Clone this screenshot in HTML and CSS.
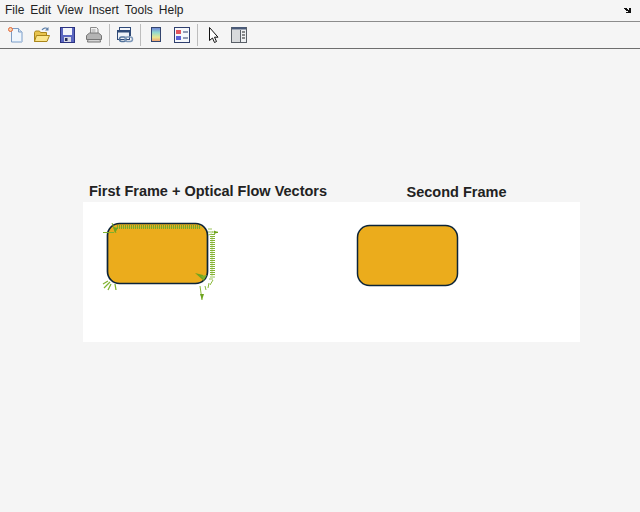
FILE: index.html
```html
<!DOCTYPE html>
<html lang="en">
  <head>
    <meta charset="UTF-8" />
    <title>Figure</title>
    <link rel="stylesheet" href="styles.css">
  </head>
  <body>
    <div class="menubar">
      <div class="menus">
        <span>File</span>
        <span>Edit</span>
        <span>View</span>
        <span>Insert</span>
        <span>Tools</span>
        <span>Help</span>
      </div>
      <svg class="dock" width="7" height="5" viewBox="0 0 7 5">
        <path d="M0 0h3v1h1v1h1V0h2v5H2V4h2V3H2V2H1V1H0z" fill="#111" />
      </svg>
    </div>

    <div class="toolbar">
      <div class="group">
        <svg class="tool" width="18" height="18" viewBox="0 0 18 18">
          <path d="M4.500 2.500h7l3.500 3.500v10h-10.500z" fill="#f0f6fc" stroke="#7d9cc4" />
          <path d="M11.500 2.500v3.500h3.500" fill="#cfe0f2" stroke="#7d9cc4" />
          <path d="M5.500 15.500h9v-9" fill="none" stroke="#b4cbe6" />
          <circle cx="3.500" cy="3.500" r="2" fill="#f9d0a8" stroke="#e2683a" />
        </svg>
        <svg class="tool" width="18" height="18" viewBox="0 0 18 18">
          <path d="M1.500 15.500v-9l1-1.500h4l1 1.500h6v9z" fill="#e8c44e" stroke="#a98519" />
          <path d="M1.500 15.500l2-6h13l-2.500 6z" fill="#fbe68c" stroke="#a98519" />
          <path d="M9 4c1.500-2 4-2.500 5.500-1.500" fill="none" stroke="#5c7ea8" stroke-width="1.200" />
          <path d="M15.500 1v3.500h-3.500z" fill="#5c7ea8" />
        </svg>
        <svg class="tool" width="18" height="18" viewBox="0 0 18 18">
          <rect x="1.500" y="1.500" width="14" height="15" fill="#5a66c0" stroke="#2b3280" />
          <rect x="4" y="2" width="9" height="7" fill="#f2f4fa" />
          <rect x="5" y="11" width="7" height="5" fill="#d8dae4" />
          <rect x="6" y="12" width="2.500" height="3" fill="#222a5c" />
        </svg>
        <svg class="tool" width="18" height="18" viewBox="0 0 18 18">
          <path d="M5.500 1.500h6l1.500 1.500v5h-7.500z" fill="#f2f2f2" stroke="#8a8a8a" />
          <path d="M1.500 9.500l3-2.500h9l3 2.500v4h-15z" fill="#b4b4b4" stroke="#757575" />
          <path d="M3 13.500h12l.5 2.500h-13z" fill="#d6d6d6" stroke="#757575" />
          <path d="M6.500 4h4M6.500 6h4" stroke="#a0a0a0" />
        </svg>
      </div>
      <div class="group">
        <svg class="tool" width="18" height="18" viewBox="0 0 18 18">
          <rect x="3.500" y="1.500" width="11" height="8" fill="#f4f6fa" stroke="#2f4a78" />
          <rect x="1.500" y="4.500" width="12" height="9" fill="#eef2f8" stroke="#2f4a78" />
          <path d="M2 5h11v1.500h-11z" fill="#2f4a78" />
          <rect x="3.500" y="11" width="6.500" height="4.500" rx="2.200" fill="none" stroke="#54749c" stroke-width="1.500" />
          <rect x="9" y="11" width="7.500" height="4.500" rx="2.200" fill="none" stroke="#7d97b8" stroke-width="1.500" />
        </svg>
      </div>
      <div class="group">
        <svg class="tool" width="18" height="18" viewBox="0 0 18 18">
          <defs>
            <linearGradient id="bar" x1="0" y1="0" x2="0" y2="1">
              <stop offset="0" stop-color="#6f7fd8" />
              <stop offset="0.35" stop-color="#8fd8d0" />
              <stop offset="0.7" stop-color="#e8e890" />
              <stop offset="1" stop-color="#f09a70" />
            </linearGradient>
          </defs>
          <rect x="4.500" y="1.500" width="9" height="14" fill="url(#bar)" stroke="#33456e" />
        </svg>
        <svg class="tool" width="18" height="18" viewBox="0 0 18 18">
          <rect x="1.500" y="1.500" width="15" height="15" fill="#f6f8fb" stroke="#2f3f6e" />
          <rect x="3" y="4" width="5" height="4" fill="#e2555c" />
          <rect x="3" y="10" width="5" height="4" fill="#5a62d8" />
          <path d="M10 6h5M10 12h5" stroke="#2f3f6e" />
        </svg>
      </div>
      <div class="group last">
        <svg class="tool" width="18" height="18" viewBox="0 0 18 18">
          <path d="M5.500 1.500v13l3-2.500 2 4.500 2-1-2-4.300h3.500z" fill="#fff" stroke="#111" />
        </svg>
        <svg class="tool" width="18" height="18" viewBox="0 0 18 18">
          <rect x="1.500" y="1.500" width="15" height="15" fill="#eef0f2" stroke="#5a6068" />
          <rect x="2" y="1" width="14" height="2.500" fill="#4a5a78" />
          <rect x="2" y="4" width="8" height="12" fill="#d8dadc" />
          <path d="M10.500 4v12" stroke="#5a6068" />
          <path d="M12 6h3M12 9h3M12 12h3" stroke="#222" />
        </svg>
      </div>
    </div>

    <div class="figure">
      <div class="titles">
        <h2>First Frame + Optical Flow Vectors</h2>
        <h2 class="second">Second Frame</h2>
      </div>
      <svg class="axes" width="497" height="140" viewBox="0 0 497 140">
        <rect x="24.500" y="21.500" width="100" height="60" rx="12" fill="#ebac1c" stroke="#0c2438" stroke-width="1.700" />
        <rect x="274.500" y="23.500" width="100" height="60" rx="12" fill="#ebac1c" stroke="#0c2438" stroke-width="1.500" />

        <!-- flow along the top edge -->
        <path d="M33 25.500h86" stroke="#a8c040" stroke-width="1" opacity="0.7" />
        <path class="hatch" d="M34.500 23v4M36.500 23v4M38.500 23v4M40.500 23v4M42.500 23v4M44.500 23v4M46.500 23v4M48.500 23v4M50.500 23v4M52.500 23v4M54.500 23v4M56.500 23v4M58.500 23v4M60.500 23v4M62.500 23v4M64.500 23v4M66.500 23v4M68.500 23v4M70.500 23v4M72.500 23v4M74.500 23v4M76.500 23v4M78.500 23v4M80.500 23v4M82.500 23v4M84.500 23v4M86.500 23v4M88.500 23v4M90.500 23v4M92.500 23v4M94.500 23v4M96.500 23v4M98.500 23v4M100.500 23v4M102.500 23v4M104.500 23v4M106.500 23v4M108.500 23v4M110.500 23v4M112.500 23v4M114.500 23v4M116.500 23v4" stroke="#7aa828" />
        <path d="M20 30.500h11M29 21l4 10" stroke="#7fb02c" />
        <path d="M30 25l5 1-3 5z" fill="#6fa420" />

        <!-- flow along the right edge -->
        <path d="M129 34v40" stroke="#d4e4ac" stroke-width="1.500" />
        <path class="hatch" d="M127 32.500h5M127 34.500h5M127 36.500h5M127 38.500h5M127 40.500h5M127 42.500h5M127 44.500h5M127 46.500h5M127 48.500h5M127 50.500h5M127 52.500h5M127 54.500h5M127 56.500h5M127 58.500h5M127 60.500h5M127 62.500h5M127 64.500h5M127 66.500h5M127 68.500h5M127 70.500h5M127 72.500h5" stroke="#84b436" />
        <path d="M125 27h4M125 30h5M125 33l4-1M129 30h6M127 75h5M126 77h4" stroke="#9cc45c" />
        <path d="M131 30.500h4" stroke="#6fa420" />
        <path d="M131 28.500l4 2-4 1.500z" fill="#6fa420" />

        <!-- bottom right corner -->
        <path d="M112 71l8 2 1 6z" fill="#6fa420" />
        <path d="M118 74l3 4 3-5z" fill="#7fb02c" />
        <path d="M117 84l2 14M122 84l1 4M126 81l-1 5M130 78l-3 5" stroke="#8aba3a" />
        <path d="M117 92l2 6 2-6z" fill="#6fa420" />

        <!-- bottom left corner -->
        <path d="M27 80l-6 6M25 79l-5 3M28 82l-3 6M32 82l1 6" stroke="#82b432" stroke-width="1.300" />
      </svg>
    </div>
  </body>
</html>
```

FILE: styles.css
```css
* {
  margin: 0;
  padding: 0;
  box-sizing: border-box;
}
body {
  background: #f5f5f5;
  font-family: "Liberation Sans", sans-serif;
  color: #222;
  height: 512px;
  overflow: hidden;
}
.menubar {
  height: 22px;
  display: flex;
  align-items: center;
  justify-content: space-between;
  padding: 0 9px 1px 5px;
  border-bottom: 1px solid #8c8c8c;
  font-size: 12px;
}
.menus {
  display: flex;
  gap: 6px;
}
.toolbar {
  height: 27px;
  display: flex;
  align-items: center;
  padding-left: 7px;
  border-bottom: 1px solid #6e6e6e;
}
.group {
  display: flex;
  align-items: center;
  gap: 8px;
  height: 22px;
  padding-right: 6px;
  margin-right: 6px;
  border-right: 1px solid #bdbdbd;
}
.group.last {
  border-right: 0;
}
.figure {
  margin: 134px 0 0 83px;
  width: 497px;
}
.titles {
  display: grid;
  grid-template-columns: 250px 247px;
  text-align: center;
  height: 19px;
}
.titles h2 {
  font-size: 14.5px;
  line-height: 16px;
  font-weight: 700;
  color: #222;
}
.titles .second {
  padding-top: 1px;
}
.axes {
  display: block;
  background: #fff;
}
.hatch {
  shape-rendering: crispEdges;
}
```
